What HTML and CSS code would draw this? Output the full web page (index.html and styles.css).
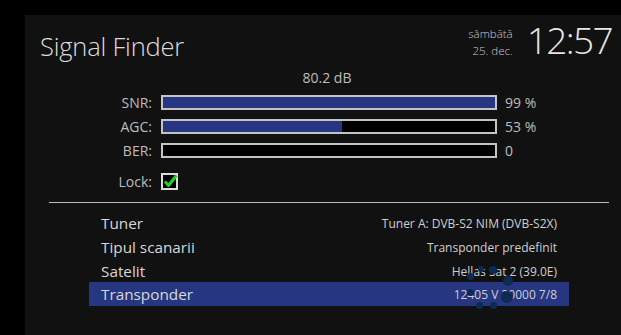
FILE: index.html
```html
<!DOCTYPE html>
<html lang="ro">
<head>
  <meta charset="UTF-8" />
  <title>Signal Finder</title>
  <link rel="stylesheet" href="styles.css">
</head>
<body>
  <div class="screen">
    <div class="panel">
      <div class="header-row">
        <h1>Signal Finder</h1>
        <div class="clock-box">
          <div class="date">
            <span>sâmbătă</span>
            <span>25. dec.</span>
          </div>
          <div class="time">12:57</div>
        </div>
      </div>

      <div class="level">80.2 dB</div>
      <div class="meters">
        <div class="meter-row">
          <span class="label">SNR:</span>
          <div class="bar"><div class="fill" style="width:100%"></div></div>
          <span class="value">99 %</span>
        </div>
        <div class="meter-row">
          <span class="label">AGC:</span>
          <div class="bar"><div class="fill" style="width:54%"></div></div>
          <span class="value">53 %</span>
        </div>
        <div class="meter-row">
          <span class="label">BER:</span>
          <div class="bar"><div class="fill" style="width:0%"></div></div>
          <span class="value">0</span>
        </div>
        <div class="meter-row lock-row">
          <span class="label">Lock:</span>
          <span class="check">
            <svg width="17" height="17" viewBox="0 0 17 17">
              <rect x="1" y="1" width="15" height="15" fill="#000" stroke="#ddd" stroke-width="2"/>
              <path d="M4 8.5 L7.5 12.5 L15.5 2.5" fill="none" stroke="#22d222" stroke-width="3" stroke-linejoin="round"/>
            </svg>
          </span>
        </div>
      </div>

      <div class="divider"></div>

      <div class="setup-list">
        <div class="setup-row"><span>Tuner</span><span class="opt">Tuner A: DVB-S2 NIM (DVB-S2X)</span></div>
        <div class="setup-row"><span>Tipul scanarii</span><span class="opt">Transponder predefinit</span></div>
        <div class="setup-row"><span>Satelit</span><span class="opt">Hellas Sat 2 (39.0E)</span></div>
        <div class="setup-row selected"><span>Transponder</span><span class="opt">12405 V 30000 7/8</span></div>
      </div>

      <!-- busy spinner over the list -->
      <div class="spinner">
        <i style="left:17px;top:7px;width:6px;height:6px"></i>
        <i style="left:28px;top:7px;width:8px;height:8px"></i>
        <i style="left:42px;top:17px;width:10px;height:10px"></i>
        <i style="left:40px;top:32px;width:12px;height:12px"></i>
        <i style="left:29px;top:43px;width:7px;height:7px"></i>
        <i style="left:15px;top:43px;width:7px;height:7px"></i>
        <i style="left:6px;top:30px;width:7px;height:7px"></i>
        <i style="left:6px;top:14px;width:7px;height:7px"></i>
      </div>
    </div>
  </div>
</body>
</html>
```

FILE: styles.css
```css
:root {
  --bg: #000;
  --panel: #111;
  --text: #d4d4d4;
  --subtext: #bdbdbd;
  --blue: #263680;
  --frame: #c4c4c4;
}
html, body { margin: 0; padding: 0; }
body {
  background: var(--bg);
  font-family: 'Open Sans', 'Noto Sans', 'DejaVu Sans', sans-serif;
  color: var(--text);
  width: 621px; height: 335px; overflow: hidden;
}
.screen { padding: 15px 0 0 25px; }
.panel {
  background: var(--panel);
  height: 320px;
  position: relative;
}
.header-row {
  display: flex; justify-content: space-between; align-items: flex-start;
  padding: 0 9px 0 15px;
  height: 54px;
}
h1 {
  margin: 14px 0 0 0;
  font-size: 25.5px; font-weight: 300;
  color: #dcdcdc; line-height: 34px;
  letter-spacing: -0.2px;
}
.clock-box { display: flex; align-items: flex-start; gap: 14px; }
.date {
  display: flex; flex-direction: column; align-items: flex-end;
  margin-top: 10px;
  font-size: 11.5px; line-height: 17px; color: #c8c8c8; font-weight: 300;
}
.time {
  font-size: 37px; font-weight: 300; line-height: 40px;
  margin-top: 5px;
  color: #e6e6e6;
  letter-spacing: -1.6px;
}
.level {
  text-align: center;
  padding-left: 8px;
  font-size: 14px; line-height: 18px;
  color: var(--subtext);
}
.meters { display: flex; flex-direction: column; gap: 9px; margin-top: 8px; }
.meter-row { display: flex; align-items: center; height: 15px; }
.meter-row .label {
  width: 136px; text-align: right; padding-right: 9px; box-sizing: border-box;
  font-size: 14px; color: var(--subtext);
}
.bar {
  width: 336px; height: 15px; box-sizing: border-box;
  border: 2px solid var(--frame);
  background: #000;
}
.fill { height: 100%; background: var(--blue); }
.meter-row .value { margin-left: 8px; font-size: 14px; color: var(--subtext); }
.lock-row { height: 17px; margin-top: 6px; }
.check { display: flex; }
.divider {
  height: 1px; background: #bbb;
  margin: 12px 12px 0 24px;
}
.setup-list {
  display: flex; flex-direction: column;
  margin: 8px 52px 0 64px;
}
.setup-row {
  display: flex; justify-content: space-between; align-items: center;
  height: 24px; padding: 0 12px;
  font-size: 15.3px; color: #d8d8d8;
}
.setup-row .opt { font-size: 12px; color: #cfcfcf; }
.setup-row.selected { background: var(--blue); margin-top: -1px; }
.spinner {
  position: absolute; left: 436px; top: 244px;
  width: 60px; height: 60px;
}
.spinner i {
  position: absolute; border-radius: 50%;
  background: #0d2a55;
}
```
